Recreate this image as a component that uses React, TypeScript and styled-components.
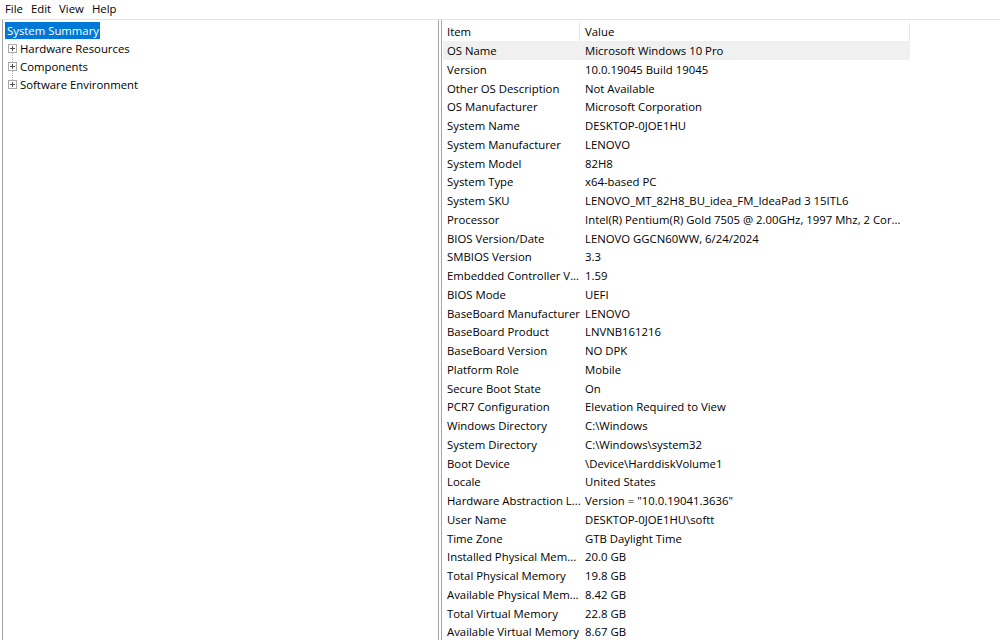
import React from "react";
import styled, { createGlobalStyle } from "styled-components";

const GlobalStyle = createGlobalStyle`
  html, body {
    margin: 0;
    padding: 0;
    background: #ffffff;
    overflow: hidden;
  }
  body {
    font-family: "Open Sans", "Noto Sans", "Liberation Sans", sans-serif;
    font-size: 11.35px;
    color: #000000;
  }
`;

const Window = styled.div`
  width: 1000px;
  height: 640px;
  display: flex;
  flex-direction: column;
  background: #ffffff;
`;

const MenuBar = styled.div`
  height: 19px;
  display: flex;
  align-items: flex-start;
  padding-left: 1px;
  border-bottom: 1px solid #e3e3e3;
`;

const MenuItem = styled.span`
  padding: 0 4px;
  line-height: 17px;
`;

const Body = styled.div`
  flex: 1;
  display: flex;
  gap: 2px;
  padding-left: 2px;
  min-height: 0;
`;

const TreePane = styled.div`
  width: 435px;
  border-left: 1px solid #a5a5a5;
  border-right: 1px solid #a5a5a5;
  padding: 1px 0 0 0;
`;

const TreeRow = styled.div<{ $child?: boolean }>`
  height: 18px;
  display: flex;
  align-items: center;
  padding-left: ${(p) => (p.$child ? "5px" : "2px")};
  position: relative;
`;

const Selected = styled.span`
  background: #0078d7;
  color: #ffffff;
  padding: 0 1px 0 2px;
  line-height: 17px;
`;

const Expander = styled.span`
  width: 9px;
  height: 9px;
  box-sizing: border-box;
  border: 1px solid #a8a8a8;
  background: #ffffff;
  position: relative;
  margin-right: 3px;
  flex-shrink: 0;
  z-index: 1;
  &::before {
    content: "";
    position: absolute;
    left: 1px;
    top: 3px;
    width: 5px;
    height: 1px;
    background: #505050;
  }
  &::after {
    content: "";
    position: absolute;
    left: 3px;
    top: 1px;
    width: 1px;
    height: 5px;
    background: #505050;
  }
`;

const TreeLine = styled.span`
  position: absolute;
  left: 9px;
  top: 9px;
  height: 18px;
  border-left: 1px dotted #b0b0b0;
  z-index: 0;
`;

const Label = styled.span`
  line-height: 17px;
  z-index: 1;
`;

const ListPane = styled.div`
  flex: 1;
  border-left: 1px solid #a5a5a5;
  padding: 2.5px 0 0 1px;
  overflow: hidden;
`;

const Table = styled.div`
  width: 467px;
  display: flex;
  flex-direction: column;
`;

const Row = styled.div<{ $shade?: boolean }>`
  height: 18.75px;
  display: grid;
  grid-template-columns: 137px 330px;
  align-items: center;
  background: ${(p) => (p.$shade ? "#f0f0f0" : "transparent")};
`;

const HeaderCell = styled.div<{ $pad: number }>`
  height: 100%;
  display: flex;
  align-items: center;
  padding-left: ${(p) => p.$pad}px;
  border-right: 1px solid #e5e5e5;
  white-space: nowrap;
  overflow: hidden;
`;

const Cell = styled.div<{ $pad: number }>`
  padding-left: ${(p) => p.$pad}px;
  white-space: nowrap;
  overflow: hidden;
`;

const rows: [string, string][] = [
  ["OS Name", "Microsoft Windows 10 Pro"],
  ["Version", "10.0.19045 Build 19045"],
  ["Other OS Description", "Not Available"],
  ["OS Manufacturer", "Microsoft Corporation"],
  ["System Name", "DESKTOP-0JOE1HU"],
  ["System Manufacturer", "LENOVO"],
  ["System Model", "82H8"],
  ["System Type", "x64-based PC"],
  ["System SKU", "LENOVO_MT_82H8_BU_idea_FM_IdeaPad 3 15ITL6"],
  ["Processor", "Intel(R) Pentium(R) Gold 7505 @ 2.00GHz, 1997 Mhz, 2 Cor..."],
  ["BIOS Version/Date", "LENOVO GGCN60WW, 6/24/2024"],
  ["SMBIOS Version", "3.3"],
  ["Embedded Controller V...", "1.59"],
  ["BIOS Mode", "UEFI"],
  ["BaseBoard Manufacturer", "LENOVO"],
  ["BaseBoard Product", "LNVNB161216"],
  ["BaseBoard Version", "NO DPK"],
  ["Platform Role", "Mobile"],
  ["Secure Boot State", "On"],
  ["PCR7 Configuration", "Elevation Required to View"],
  ["Windows Directory", "C:\\Windows"],
  ["System Directory", "C:\\Windows\\system32"],
  ["Boot Device", "\\Device\\HarddiskVolume1"],
  ["Locale", "United States"],
  ["Hardware Abstraction L...", 'Version = "10.0.19041.3636"'],
  ["User Name", "DESKTOP-0JOE1HU\\softt"],
  ["Time Zone", "GTB Daylight Time"],
  ["Installed Physical Mem...", "20.0 GB"],
  ["Total Physical Memory", "19.8 GB"],
  ["Available Physical Mem...", "8.42 GB"],
  ["Total Virtual Memory", "22.8 GB"],
  ["Available Virtual Memory", "8.67 GB"],
];

const treeChildren = ["Hardware Resources", "Components", "Software Environment"];

export default function App() {
  return (
    <Window>
      <GlobalStyle />
      <MenuBar>
        <MenuItem>File</MenuItem>
        <MenuItem>Edit</MenuItem>
        <MenuItem>View</MenuItem>
        <MenuItem>Help</MenuItem>
      </MenuBar>
      <Body>
        <TreePane>
          <TreeRow>
            <Selected>System Summary</Selected>
          </TreeRow>
          {treeChildren.map((name, i) => (
            <TreeRow $child key={name}>
              {i < treeChildren.length - 1 && <TreeLine />}
              <Expander />
              <Label>{name}</Label>
            </TreeRow>
          ))}
        </TreePane>
        <ListPane>
          <Table>
            <Row>
              <HeaderCell $pad={4}>Item</HeaderCell>
              <HeaderCell $pad={5}>Value</HeaderCell>
            </Row>
            {rows.map(([item, value], i) => (
              <Row key={item} $shade={i === 0}>
                <Cell $pad={4}>{item}</Cell>
                <Cell $pad={5}>{value}</Cell>
              </Row>
            ))}
          </Table>
        </ListPane>
      </Body>
    </Window>
  );
}
